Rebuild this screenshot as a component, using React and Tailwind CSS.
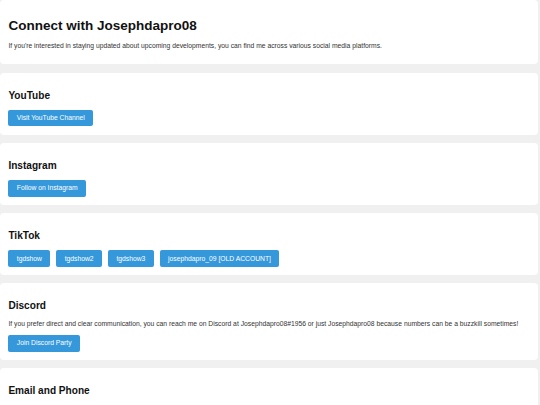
import React from "react";

const Btn = ({ children }) => (
  <a
    href="#"
    className="block bg-[#3498db] text-white text-[6.75px] leading-[7.6px] px-[8.4px] py-[4.6px] rounded-[2px]"
  >
    {children}
  </a>
);

const Card = ({ title, children }) => (
  <section className="bg-white rounded-[4px] mr-[2px] px-[8.4px] pt-[17px] pb-[8.4px]">
    <h2 className="text-[10.1px] leading-[11.3px] font-bold text-[#111] mb-[8.6px]">{title}</h2>
    {children}
  </section>
);

export default function App() {
  return (
    <div
      className="min-h-screen bg-[#f0f0f0] text-[#333] flex flex-col gap-[8.2px] pb-[20px]"
      style={{ fontFamily: '"Liberation Sans", Arial, sans-serif' }}
    >
      <header className="bg-white rounded-[4px] mr-[2px] px-[8.4px] pt-[17.5px] pb-[8.4px]">
        <h1 className="text-[13.5px] leading-[15.2px] font-bold text-[#111] mb-[9px]">
          Connect with Josephdapro08
        </h1>
        <p className="text-[6.75px] leading-[7.6px] mb-[6.75px]">
          If you're interested in staying updated about upcoming developments, you can find me across various social media platforms.
        </p>
      </header>

      <Card title="YouTube">
        <div className="flex">
          <Btn>Visit YouTube Channel</Btn>
        </div>
      </Card>

      <Card title="Instagram">
        <div className="flex">
          <Btn>Follow on Instagram</Btn>
        </div>
      </Card>

      <Card title="TikTok">
        <div className="flex gap-[6px]">
          <Btn>tgdshow</Btn>
          <Btn>tgdshow2</Btn>
          <Btn>tgdshow3</Btn>
          <Btn>josephdapro_09 [OLD ACCOUNT]</Btn>
        </div>
      </Card>

      <Card title="Discord">
        <p className="text-[6.75px] leading-[7.6px] mb-[7px]">
          If you prefer direct and clear communication, you can reach me on Discord at Josephdapro08#1956 or just Josephdapro08 because numbers can be a buzzkill sometimes!
        </p>
        <div className="flex">
          <Btn>Join Discord Party</Btn>
        </div>
      </Card>

      <Card title="Email and Phone">
        <div className="h-[24px]"></div>
      </Card>
    </div>
  );
}
